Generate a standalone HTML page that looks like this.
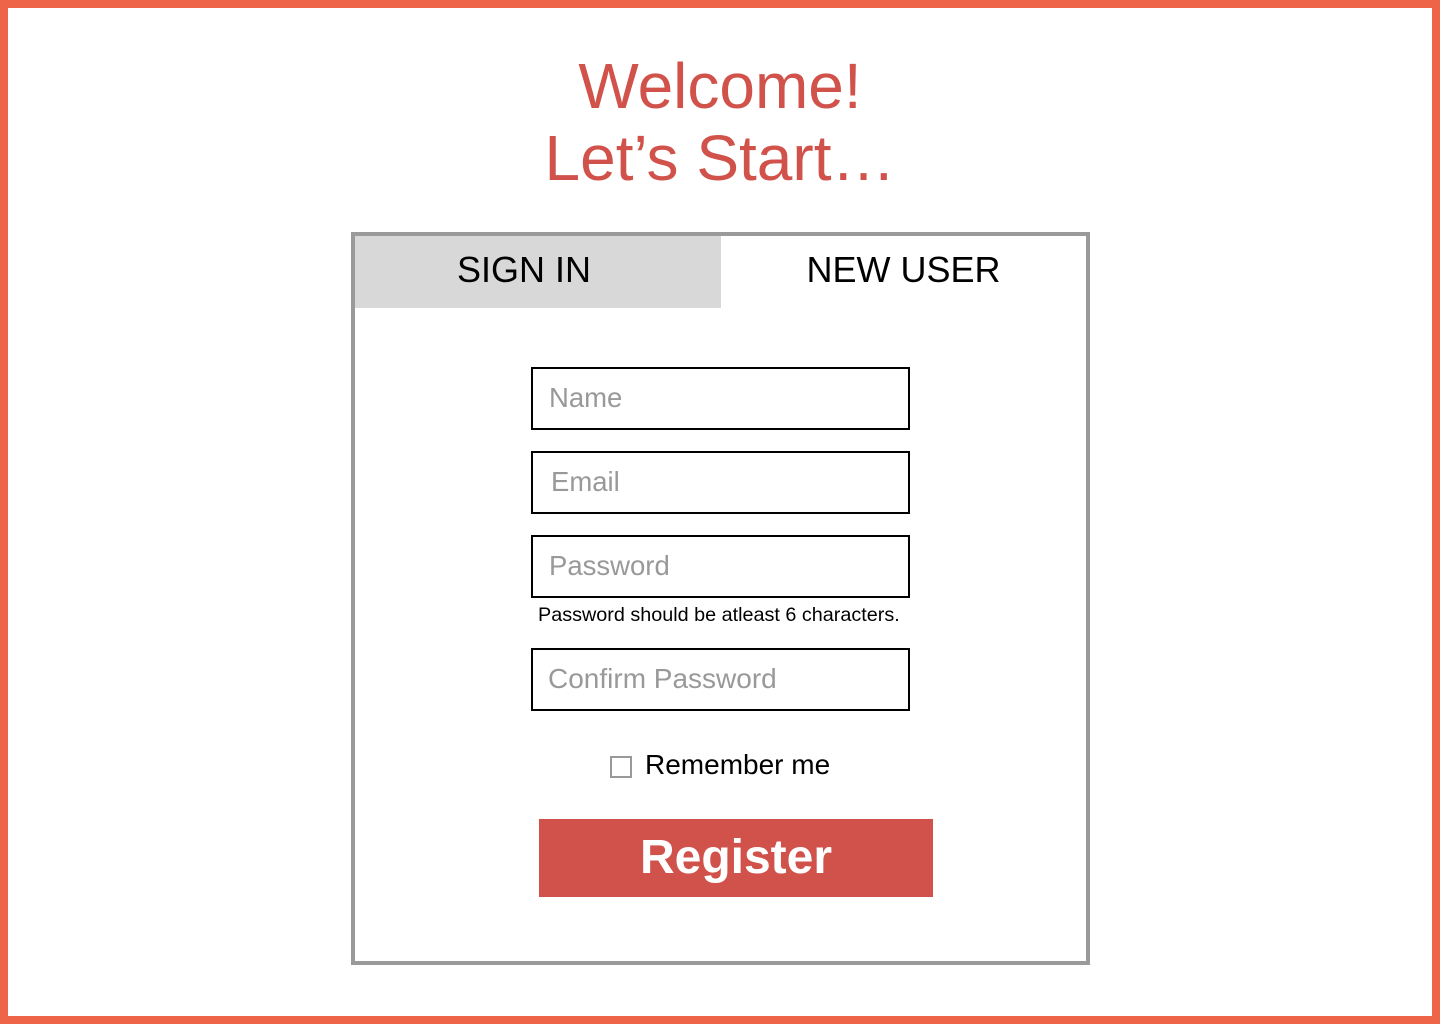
<!DOCTYPE html>
<html><head><style>
*{margin:0;padding:0;box-sizing:border-box}
body{width:1440px;height:1024px;position:relative;background:#fff;font-family:"Liberation Sans",Arial,sans-serif;overflow:hidden}
.frame{position:absolute;left:0;top:0;width:1440px;height:1024px;border:8px solid #EE6449}
.t{position:absolute;left:0;width:1440px;text-align:center;color:#D0524A;font-size:64px;line-height:1}
.card{position:absolute;left:351px;top:232px;width:739px;height:733px;border:4px solid #9a9a9a}
.tab{position:absolute;top:0;height:72px;font-size:36px;line-height:68px;text-align:center;color:#000}
.inp{position:absolute;left:531px;width:379px;height:63px;border:2px solid #000;color:#999;font-size:27.5px;line-height:57px;padding-left:16px}
.abs{position:absolute}
</style></head><body>
<div class="frame"></div>
<div class="t" style="top:54px">Welcome!</div>
<div class="t" style="top:126px">Let’s Start…</div>
<div class="card">
<div class="tab" style="left:0;width:366px;background:#d8d8d8;padding-right:28px">SIGN IN</div>
<div class="tab" style="left:366px;width:365px">NEW USER</div>
</div>
<div class="inp" style="top:367px">Name</div>
<div class="inp" style="top:451px;padding-left:18px">Email</div>
<div class="inp" style="top:535px">Password</div>
<div class="abs" style="left:538px;top:604px;font-size:19.8px;color:#000">Password should be atleast 6 characters.</div>
<div class="inp" style="top:648px;padding-left:15px;font-size:28px">Confirm Password</div>
<div class="abs" style="left:610px;top:756px;width:22px;height:22px;border:2px solid #999"></div>
<div class="abs" style="left:645px;top:749px;font-size:28px;color:#000">Remember me</div>
<div class="abs" style="left:539px;top:819px;width:394px;height:78px;background:#D0524A;color:#fff;font-weight:bold;font-size:48px;text-align:center;line-height:78px">Register</div>
</body></html>
